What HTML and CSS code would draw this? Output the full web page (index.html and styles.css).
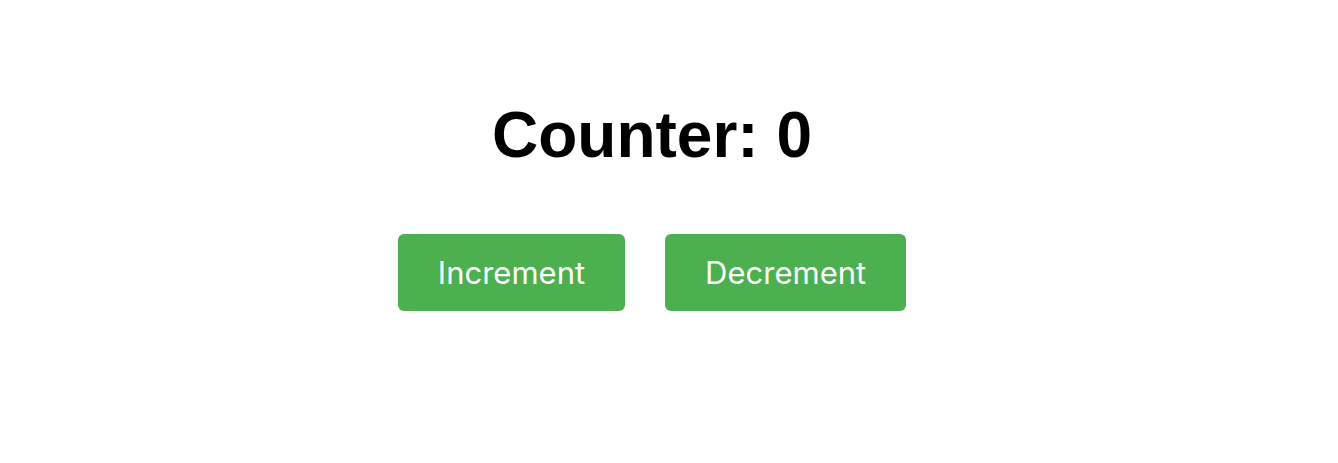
FILE: index.html
```html
<!DOCTYPE html>
<html lang="en">

<head>
	<meta charset="UTF-8">
	<meta name="viewport" content="width=device-width, initial-scale=1.0">
	<title>Counter</title>
	<link rel="stylesheet" href="styles.css">
	<script>
		let count = 0;

		function update(step) {
			count += step;
			document.getElementById('count').textContent = count;
		}
	</script>
</head>

<body>
	<div class="app">
		<h1>Counter: <span id="count">0</span></h1>
		<div class="buttons">
			<button class="btn" onclick="update(1)">Increment</button>
			<button class="btn" onclick="update(-1)">Decrement</button>
		</div>
	</div>
</body>

</html>
```

FILE: styles.css
```css
body {
	margin: 0;
	background-color: #fff;
	color: #000;
}

.app {
	padding: 98px 34px 0 0;
	text-align: center;
}

h1 {
	margin: 0;
	font-family: "Liberation Sans", Arial, sans-serif;
	font-size: 64px;
	font-weight: bold;
}

.buttons {
	display: flex;
	justify-content: center;
	gap: 40px;
	margin-top: 62px;
}

.btn {
	padding: 20px 40px;
	border: none;
	border-radius: 6px;
	background-color: #4CAF50;
	color: #fff;
	font-family: Inter, "Noto Sans", sans-serif;
	font-size: 31px;
	line-height: 37px;
	cursor: pointer;
}
```
